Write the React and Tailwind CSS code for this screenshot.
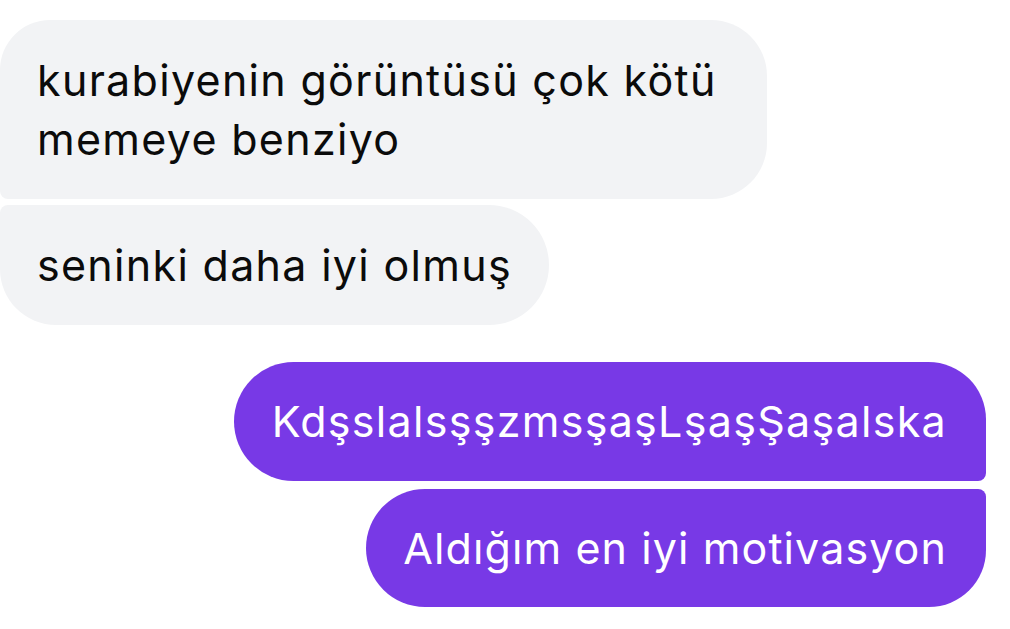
export default function App() {
  return (
    <div
      className="w-[1010px] h-[629px] bg-white overflow-hidden flex flex-col pt-[20px] text-[43px] leading-[59px] tracking-[1.3px]"
      style={{ fontFamily: "Inter, 'Noto Sans', sans-serif" }}
    >
      <div className="flex flex-col items-start gap-[6px]">
        <div className="w-[767px] h-[179px] flex items-center bg-[#f2f3f5] text-[#0b0b0b] pl-[37px] pr-[37px] rounded-tl-[50px] rounded-tr-[56px] rounded-br-[56px] rounded-bl-[8px]">
          <p>
            kurabiyenin görüntüsü çok kötü
            <br />
            memeye benziyo
          </p>
        </div>
        <div className="h-[120px] flex items-center bg-[#f2f3f5] text-[#0b0b0b] pl-[37px] pr-[37px] rounded-tl-[8px] rounded-tr-[60px] rounded-br-[60px] rounded-bl-[56px]">
          <p>seninki daha iyi olmuş</p>
        </div>
      </div>

      <div className="mt-[37px] flex flex-col items-end gap-[8px] pr-[24px]">
        <div className="h-[119px] flex items-center bg-[#7839e6] text-white pl-[38px] pr-[39px] rounded-tl-[60px] rounded-bl-[60px] rounded-tr-[58px] rounded-br-[8px]">
          <p>KdşslalsşşzmsşaşLşaşŞaşalska</p>
        </div>
        <div className="h-[118px] flex items-center bg-[#7839e6] text-white pl-[37px] pr-[39px] tracking-[1.1px] rounded-tl-[60px] rounded-bl-[60px] rounded-tr-[8px] rounded-br-[58px]">
          <p>Aldığım en iyi motivasyon</p>
        </div>
      </div>
    </div>
  );
}
